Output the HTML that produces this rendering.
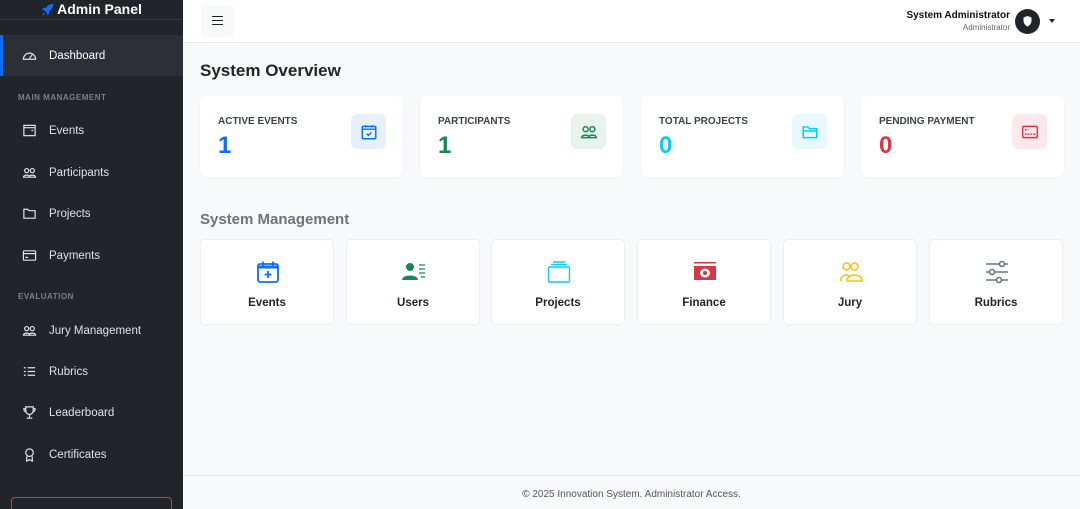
<!DOCTYPE html>
<html><head><meta charset="utf-8"><style>
*{box-sizing:border-box;margin:0;padding:0}
html,body{width:1080px;height:509px;overflow:hidden}
body{font-family:"Liberation Sans",sans-serif;background:#f8f9fa;position:relative}
.sb{position:absolute;left:0;top:0;width:183px;height:509px;background:#212529;color:#dee2e6;overflow:hidden}
.brand{height:21px;border-bottom:1px solid #343a40;color:#fff;font-weight:bold;font-size:14px;text-align:center;line-height:21px;margin-top:-1px}
.brand svg{vertical-align:-2px;margin-right:3px}
.nav{position:absolute;left:0;width:183px;height:41px;display:flex;align-items:center;padding-left:22px;font-size:11.5px;color:#dee2e6}
.nav svg{width:15px;height:15px;margin-right:12px;stroke:#dee2e6;fill:none;stroke-width:1.3}
.act{background:#2c3036;border-left:3px solid #0d6efd;padding-left:19px;color:#fff}
.sec{position:absolute;left:18px;font-size:8px;font-weight:bold;color:#7a8088;letter-spacing:.5px}
.logout{position:absolute;left:11px;top:497px;width:161px;height:30px;border:1px solid #dc3545;border-radius:4px}
.hd{position:absolute;left:183px;top:0;width:897px;height:43px;background:#fff;border-bottom:1px solid #e5e7ea}
.tog{position:absolute;left:18px;top:5px;width:33px;height:32px;background:#f8f9fa;border-radius:4px}
.tog i{position:absolute;left:11px;width:11px;height:1.4px;background:#222}
.un{position:absolute;right:70px;top:10px;text-align:right;font-size:10px;font-weight:bold;color:#111}
.un small{display:block;font-weight:normal;font-size:8px;color:#666;margin-top:2px}
.av{position:absolute;left:832px;top:9px;width:25px;height:25px;border-radius:50%;background:#212529}
.car{position:absolute;left:866px;top:19px;border:3.5px solid transparent;border-top:4px solid #222}
h1{position:absolute;left:200px;top:61px;font-size:17px;color:#212529}
.st{position:absolute;top:96px;width:203px;height:81px;background:#fff;border-radius:7px;box-shadow:0 1px 2px rgba(0,0,0,.04)}
.st .l{position:absolute;left:18px;top:20px;font-size:10px;font-weight:bold;color:#3d4248}
.st .v{position:absolute;left:18px;top:36px;font-size:24px;font-weight:bold}
.st .ic{position:absolute;right:17px;top:18px;width:35px;height:35px;border-radius:6px;display:flex;align-items:center;justify-content:center}
.st svg{width:18px;height:18px;fill:none;stroke-width:1.3}
h2{position:absolute;left:200px;top:211px;font-size:15px;color:#6c737b}
.mc{position:absolute;top:239px;width:134px;height:86px;background:#fff;border-radius:5px;border:1px solid #eceef0;text-align:center}
.mc svg{position:absolute;left:55px;top:20px;width:24px;height:24px}
.mc b{position:absolute;left:0;right:0;top:57px;font-size:11.5px;color:#212529}
.ft{position:absolute;left:183px;top:475px;width:897px;height:34px;border-top:1px solid #e5e7ea;text-align:center;font-size:10px;color:#555;line-height:38px}
</style></head><body>
<div class="sb">
<div class="brand"><svg width="13" height="13" viewBox="0 0 16 16" fill="#0d6efd"><path d="M15 1c-4 0-7 2-9 5L3 6l-2 2 3 1 3 3 1 3 2-2 0-3c3-2 5-5 5-9zM4 12l-2 2 0 1 1 0 2-2z"/></svg>Admin Panel</div>
<div class="nav act" style="top:35px"><svg viewBox="0 0 16 16"><path d="M1.5 12a6.5 6.5 0 1 1 13 0z"/><path d="M8 11l3-4"/></svg>Dashboard</div>
<div class="sec" style="top:93px">MAIN MANAGEMENT</div>
<div class="nav" style="top:110px"><svg viewBox="0 0 16 16"><rect x="2" y="2.5" width="12" height="11"/><path d="M2 5h12M10 8h2"/></svg>Events</div>
<div class="nav" style="top:152px"><svg viewBox="0 0 16 16"><circle cx="5" cy="6" r="2.2"/><circle cx="11" cy="6" r="2.2"/><path d="M1.5 13c0-3 7-3 7 0zM7.5 13c0-3 7-3 7 0z"/></svg>Participants</div>
<div class="nav" style="top:193px"><svg viewBox="0 0 16 16"><path d="M2 3.5h4l1.5 1.5H14v8H2z"/></svg>Projects</div>
<div class="nav" style="top:235px"><svg viewBox="0 0 16 16"><rect x="1.5" y="3" width="13" height="10" rx="1"/><path d="M1.5 6h13M3.5 10h3"/></svg>Payments</div>
<div class="sec" style="top:292px">EVALUATION</div>
<div class="nav" style="top:310px"><svg viewBox="0 0 16 16"><circle cx="5" cy="6" r="2.2"/><circle cx="11" cy="6" r="2.2"/><path d="M1.5 13c0-3 7-3 7 0zM7.5 13c0-3 7-3 7 0z"/></svg>Jury Management</div>
<div class="nav" style="top:351px"><svg viewBox="0 0 16 16"><path d="M6 4h8M6 8h8M6 12h8M2 4h2M2 8h2M2 12h2"/></svg>Rubrics</div>
<div class="nav" style="top:392px"><svg viewBox="0 0 16 16"><path d="M4 2h8v4a4 4 0 0 1-8 0zM4 4H2c0 2 1 3 2 3M12 4h2c0 2-1 3-2 3M8 10v3M5 14h6"/></svg>Leaderboard</div>
<div class="nav" style="top:434px"><svg viewBox="0 0 16 16"><circle cx="8" cy="6" r="4"/><path d="M5 10v5l3-1.5 3 1.5v-5"/></svg>Certificates</div>
<div class="logout"></div>
</div>
<div class="hd"><div class="tog"><i style="top:11px"></i><i style="top:15px"></i><i style="top:19px"></i></div>
<div class="un">System Administrator<small>Administrator</small></div>
<div class="av"><svg viewBox="0 0 25 25" width="25" height="25"><path d="M12.5 7l4 1.5v3c0 3-2 5-4 6-2-1-4-3-4-6v-3z" fill="#fff"/></svg></div><div class="car"></div></div>
<h1>System Overview</h1>
<div class="st" style="left:200px"><div class="l">ACTIVE EVENTS</div><div class="v" style="color:#0d6efd">1</div><div class="ic" style="background:#e7f0fe"><svg viewBox="0 0 16 16" stroke="#0d6efd"><rect x="2" y="3" width="12" height="11" rx="1"/><path d="M2 5.5h12M6 9.5l1.5 1.5 2.5-2.5M5 2v2M11 2v2"/></svg></div></div>
<div class="st" style="left:420px"><div class="l">PARTICIPANTS</div><div class="v" style="color:#198754">1</div><div class="ic" style="background:#e8f3ed"><svg viewBox="0 0 16 16" stroke="#198754"><circle cx="5" cy="5.5" r="2.2"/><circle cx="11" cy="5.5" r="2.2"/><path d="M1.5 13c0-3 7-3 7 0zM7.5 13c0-3 7-3 7 0z"/></svg></div></div>
<div class="st" style="left:641px"><div class="l">TOTAL PROJECTS</div><div class="v" style="color:#0dcaf0">0</div><div class="ic" style="background:#e7f9fd"><svg viewBox="0 0 16 16" stroke="#0dcaf0"><path d="M2 3.5h4l1.5 1.5H14v8H2zM2 7h12"/></svg></div></div>
<div class="st" style="left:861px"><div class="l">PENDING PAYMENT</div><div class="v" style="color:#dc3545">0</div><div class="ic" style="background:#fbe9eb"><svg viewBox="0 0 16 16" stroke="#dc3545"><rect x="1.5" y="3" width="13" height="10" rx="1"/><path d="M3.5 6h3M3.5 10h9" stroke-dasharray="1.5 1"/></svg></div></div>
<h2>System Management</h2>
<div class="mc" style="left:200px"><svg viewBox="0 0 24 24" fill="none" stroke="#0d6efd" stroke-width="1.8"><rect x="2" y="4" width="20" height="18" rx="2"/><path d="M2 7h20" stroke-width="3"/><path d="M12 11v7M8.5 14.5h7M7 1.5v4M17 1.5v4"/></svg><b>Events</b></div>
<div class="mc" style="left:346px"><svg viewBox="0 0 24 24" fill="#198754"><circle cx="8" cy="7" r="4"/><path d="M0 20c0-6 16-6 16 0z"/><path d="M17 5h6M17 9h6M17 13h6M19 17h4" stroke="#198754" stroke-width="1.3"/></svg><b>Users</b></div>
<div class="mc" style="left:491px"><svg viewBox="0 0 24 24" fill="none" stroke="#0dcaf0" stroke-width="1.4"><path d="M6 2h12M4 4.5h16"/><rect x="1.5" y="7" width="21" height="15" rx="1"/></svg><b>Projects</b></div>
<div class="mc" style="left:637px"><svg viewBox="0 0 24 24" fill="#dc3545"><rect x="1" y="2" width="22" height="1.5"/><rect x="1" y="6" width="22" height="14"/><ellipse cx="12" cy="13" rx="5" ry="4.5" fill="#fff"/><circle cx="12" cy="13" r="2"/></svg><b>Finance</b></div>
<div class="mc" style="left:783px"><svg viewBox="0 0 24 24" fill="none" stroke="#ffc107" stroke-width="1.6"><circle cx="7.5" cy="6.5" r="3.5"/><circle cx="15.5" cy="6.5" r="3.5"/><path d="M1.5 21c0-7 8-7 9-4M8 21c0-8 15-8 15 0z"/></svg><b>Jury</b></div>
<div class="mc" style="left:929px"><svg viewBox="0 0 24 24" fill="none" stroke="#6c757d" stroke-width="1.6"><path d="M1 4h22M1 12h22M1 20h22"/><circle cx="17" cy="4" r="2.5" fill="#fff"/><circle cx="7" cy="12" r="2.5" fill="#fff"/><circle cx="14" cy="20" r="2.5" fill="#fff"/></svg><b>Rubrics</b></div>
<div class="ft">© 2025 Innovation System. Administrator Access.</div>
</body></html>
